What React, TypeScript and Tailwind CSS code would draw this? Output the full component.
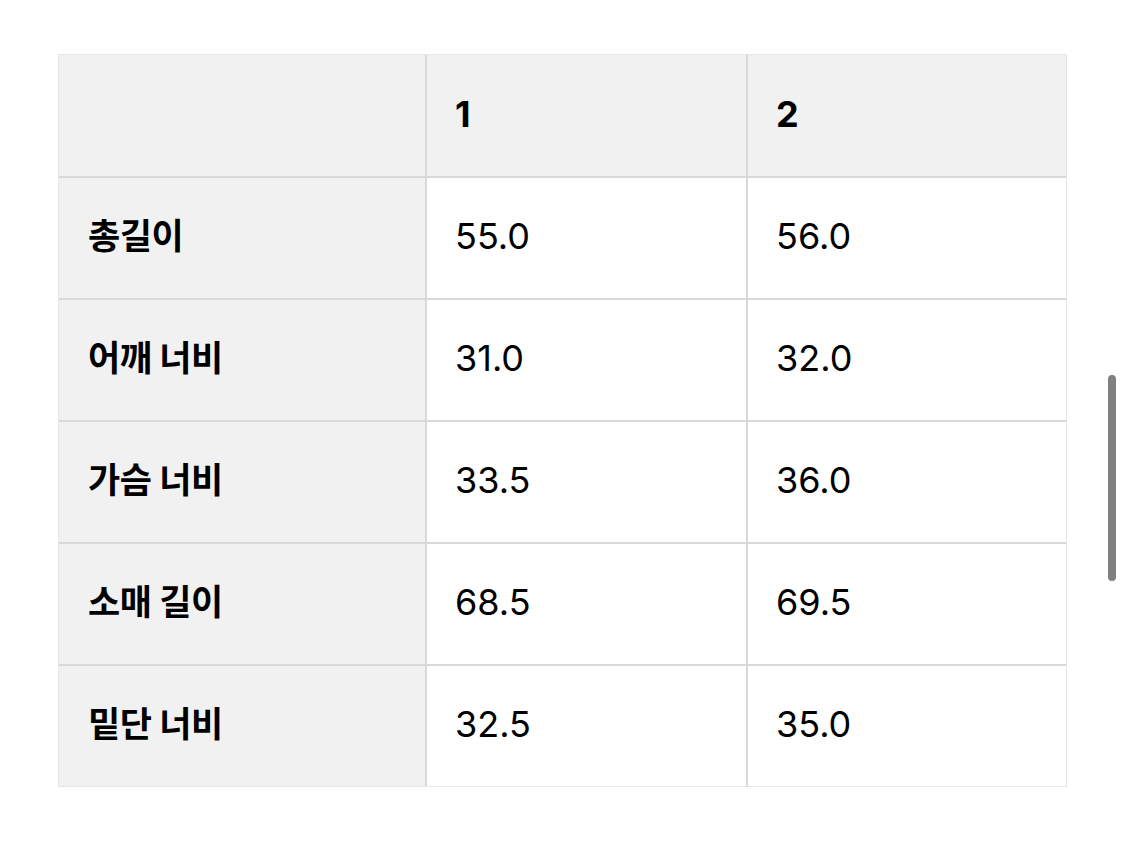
const header = ['', '1', '2'];

const rows: [string, string, string][] = [
  ['총길이', '55.0', '56.0'],
  ['어깨 너비', '31.0', '32.0'],
  ['가슴 너비', '33.5', '36.0'],
  ['소매 길이', '68.5', '69.5'],
  ['밑단 너비', '32.5', '35.0'],
];

const font = "font-['Inter','Noto_Sans_CJK_KR',sans-serif]";

export default function App() {
  return (
    <div className={`relative w-[1125px] h-[855px] bg-white text-black ${font}`}>
      <div className="pt-[54px] pl-[58px]">
        <div className="w-[1009px] border border-[#e6e6e6]">
          <div className="grid grid-cols-[366px_321px_320px] h-[121px] bg-[#f1f1f1]">
            {header.map((h, i) => (
              <div
                key={i}
                className={`flex items-center pl-[28px] pb-[4px] text-[36px] font-bold ${i > 0 ? 'border-l-2 border-[#d9d9d9]' : ''}`}
              >
                {h}
              </div>
            ))}
          </div>
          {rows.map((r) => (
            <div key={r[0]} className="grid grid-cols-[366px_321px_320px] h-[122px] border-t-2 border-[#d9d9d9]">
              <div className="flex items-center pl-[29px] pb-[3px] bg-[#f1f1f1] text-[35px] font-bold tracking-[-0.5px]">
                {r[0]}
              </div>
              <div className="flex items-center pl-[28px] pb-[4px] border-l-2 border-[#d9d9d9] text-[36px]">{r[1]}</div>
              <div className="flex items-center pl-[28px] pb-[4px] border-l-2 border-[#d9d9d9] text-[36px]">{r[2]}</div>
            </div>
          ))}
        </div>
      </div>
      <div className="absolute left-[1108px] top-[375px] w-[8px] h-[206px] rounded-full bg-[#808080]" />
    </div>
  );
}
